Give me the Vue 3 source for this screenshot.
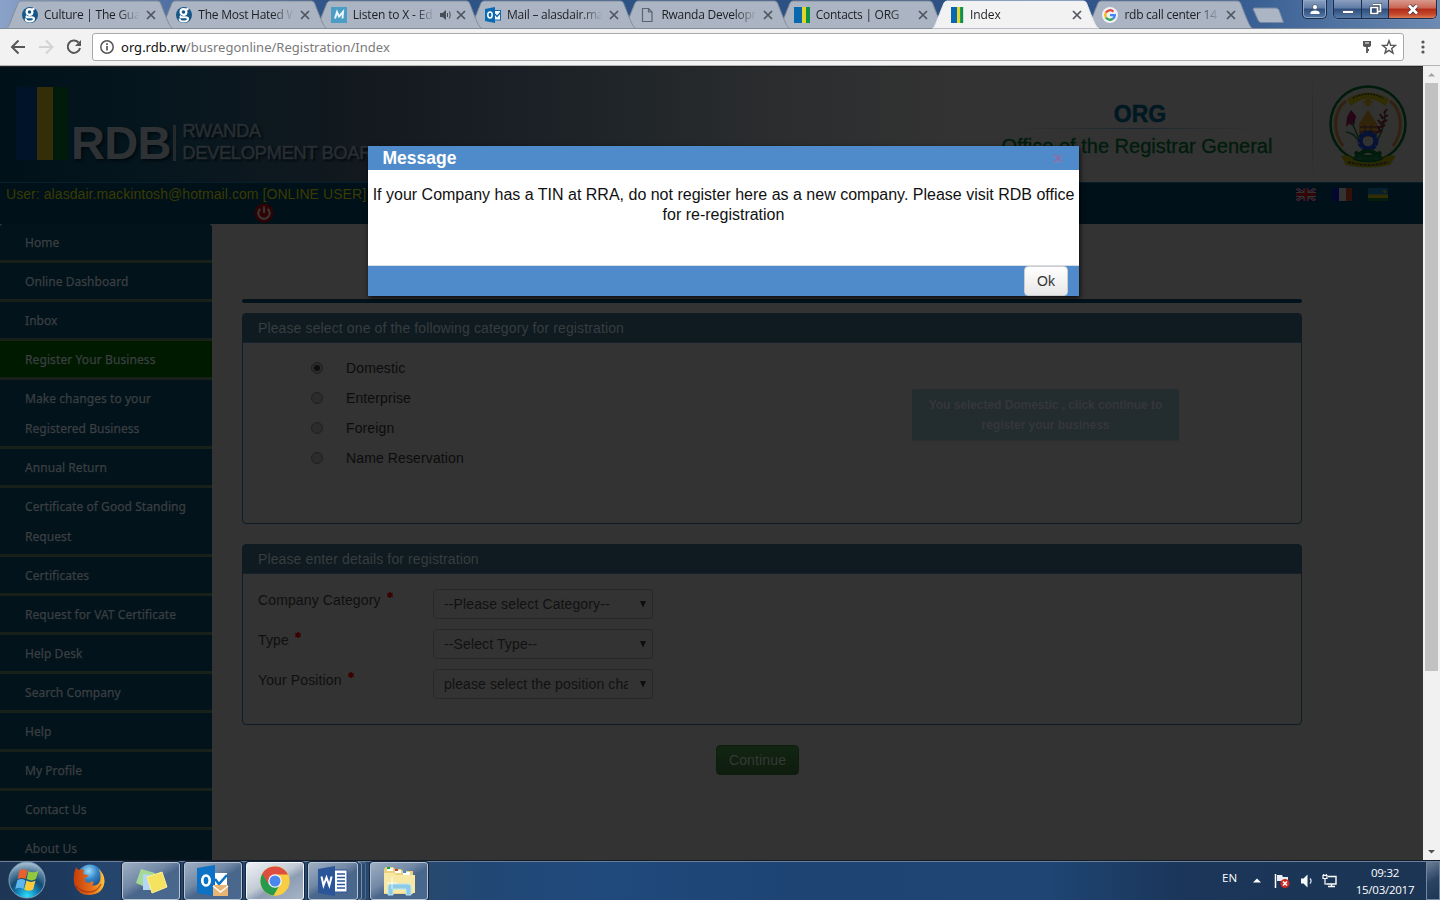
<script setup>
const tabs = [
  { title: 'Culture | The Guardian', icon: 'guardian' },
  { title: 'The Most Hated Woman', icon: 'guardian' },
  { title: 'Listen to X - Ed Sheeran', icon: 'mix', audio: true },
  { title: 'Mail – alasdair.mackintosh', icon: 'outlook' },
  { title: 'Rwanda Development', icon: 'page' },
  { title: 'Contacts | ORG', icon: 'rdb' },
  { title: 'Index', icon: 'rdb', active: true },
  { title: 'rdb call center 1415', icon: 'google' },
]
const menu = [
  'Home', 'Online Dashboard', 'Inbox', 'Register Your Business', 'Make changes to your Registered Business',
  'Annual Return', 'Certificate of Good Standing Request', 'Certificates', 'Request for VAT Certificate',
  'Help Desk', 'Search Company', 'Help', 'My Profile', 'Contact Us', 'About Us',
]
const categories = ['Domestic', 'Enterprise', 'Foreign', 'Name Reservation']
const fields = [
  { label: 'Company Category', value: '--Please select Category--' },
  { label: 'Type', value: '--Select Type--' },
  { label: 'Your Position', value: 'please select the position chairman' },
]
</script>

<template>
  <div class="screen">
    <div class="tabstrip">
      <div class="tabs">
        <div v-for="(t, i) in tabs" :key="i" class="tab" :class="{ active: t.active }" :style="{ zIndex: t.active ? 20 : 10 - i }">
          <svg class="shape" width="168" height="29" viewBox="0 0 168 29">
            <path d="M0.5 28.5 C3 27 3 25 12 3 Q13 1 15 1 H151.500 Q153.500 1 154.500 3 C163 25 164 27 167 28.500" :fill="t.active ? '#f2f2f2' : '#abb4c2'" :stroke="t.active ? '#e9edf2' : '#818b9a'" />
            <path v-if="!t.active" d="M0 28.500 H168" stroke="#838b97" />
          </svg>
          <svg class="fav" width="16" height="16" viewBox="0 0 16 16">
            <g v-if="t.icon === 'guardian'">
              <circle cx="8" cy="8" r="8" fill="#165788" />
              <ellipse cx="7.500" cy="5" rx="2.900" ry="2.800" fill="none" stroke="#fff" stroke-width="2.200" />
              <path d="M9.500 2.800 12.500 1.500M5 8.600Q3.500 10.300 6 10.300H9.500Q12.500 10.500 12 12.300Q11 14.500 8 14.500Q3 14.400 3.800 11.600" fill="none" stroke="#fff" stroke-width="2" />
            </g>
            <g v-else-if="t.icon === 'mix'">
              <rect width="16" height="16" fill="#4c9dc5" />
              <path d="M4 11.500 6 5 8 9.500 12 5 11.500 11.500" fill="none" stroke="#e9f4fb" stroke-width="2" />
            </g>
            <g v-else-if="t.icon === 'outlook'">
              <rect x="9" y="3.500" width="6.500" height="9.500" fill="#fff" stroke="#0f68b0" />
              <path d="m10 7 2 2.500 3.500-4" fill="none" stroke="#0f68b0" stroke-width="1.300" />
              <path d="M0 2 10 0V16L0 14Z" fill="#0c69b4" />
              <ellipse cx="5" cy="8" rx="2.200" ry="2.900" fill="none" stroke="#fff" stroke-width="1.500" />
            </g>
            <g v-else-if="t.icon === 'page'" fill="none" stroke="#5b636e" stroke-width="1.200">
              <path d="M3.500 1.500H9.500L13 5V14.500H3.500Z" /><path d="M9.500 1.500V5H13" />
            </g>
            <g v-else-if="t.icon === 'rdb'" :transform="t.active ? 'translate(3 0) scale(.76 1)' : null">
              <path d="M0 0H8V16H0Z" fill="#0968ad" /><path d="M8 0H12V16H8Z" fill="#e3d42b" /><path d="M12 0H16V16H12Z" fill="#0e9045" />
            </g>
            <g v-else fill="none" stroke-width="2.300">
              <circle cx="8" cy="8" r="8" fill="#eef0f4" />
              <path d="M11.400 4.600A4.800 4.800 0 0 0 3.900 5.600" stroke="#e34a3c" /><path d="M3.900 5.600A4.800 4.800 0 0 0 3.900 10.500" stroke="#f2b90f" />
              <path d="M3.900 10.500A4.800 4.800 0 0 0 11 11.700" stroke="#35a553" /><path d="M11 11.700A4.800 4.800 0 0 0 12.800 8.100H8" stroke="#4384f0" />
            </g>
          </svg>
          <span class="tab-title" :class="{ short: t.audio }">{{ t.title }}</span>
          <svg v-if="t.audio" class="audio" width="12" height="12" viewBox="0 0 12 12"><path d="M0 4H2.500L6 1V11L2.500 8H0Z" fill="#474d57" /><path d="M7.500 4V8M9.500 2.500Q11 6 9.500 9.500" fill="none" stroke="#474d57" /></svg>
          <svg class="close" width="10" height="10" viewBox="0 0 10 10"><path d="m1 1 8 8M9 1 1 9" stroke="#50555d" stroke-width="1.700" /></svg>
        </div>
      </div>
      <svg class="newtab" width="34" height="17" viewBox="0 0 34 17"><path d="M3 1H25Q27 1 28 3L32.500 15.500H10Q8 15.500 7 13L2 2Z" fill="#acb5c3" stroke="#7688a3" /></svg>
      <div class="winbtns">
        <span class="wb user"><svg width="12" height="13" viewBox="0 0 12 13"><circle cx="6" cy="4" r="2.500" fill="#fff" stroke="#26364f" stroke-width=".6" /><path d="M1.500 11V9.500Q2 7.500 6 7.500T10.500 9.500V11Z" fill="#fff" /></svg></span>
        <span class="wgroup">
          <span class="wb min"><i></i></span>
          <span class="wb res"><svg width="13" height="12" viewBox="0 0 13 12"><path d="M4 1.500H11.500V8.500H9M2 4.500H8.500V10.500H2Z" fill="none" stroke="#36475f" stroke-width="3" /><path d="M4 1.500H11.500V8.500H9M2 4.500H8.500V10.500H2Z" fill="none" stroke="#fff" stroke-width="1.700" /></svg></span>
          <span class="wb cls"><svg width="14" height="11" viewBox="0 0 14 11"><path d="m3 1.500 8 8M11 1.500l-8 8" stroke="#4a3540" stroke-width="4.200" /><path d="m3 1.500 8 8M11 1.500l-8 8" stroke="#fff" stroke-width="2.700" /></svg></span>
        </span>
      </div>
    </div>

    <div class="toolbar">
      <svg class="nav" width="82" height="20" viewBox="0 0 82 20" fill="none" stroke-width="2">
        <path d="M15 10H2.500M8.500 3.500 2 10l6.500 6.500" stroke="#575757" />
        <path d="M29 10H41.500M36 3.500 42.500 10 36 16.500" stroke="#d3d3d3" />
        <path d="M68.500 5.500A6.200 6.200 0 1 0 70 11" stroke="#575757" /><path d="M71 3V9H65Z" fill="#575757" />
      </svg>
      <div class="omnibox">
        <svg width="16" height="16" viewBox="0 0 16 16"><circle cx="8" cy="8" r="6.200" fill="none" stroke="#555" stroke-width="1.500" /><path d="M8 7v4.500M8 4.200v1.700" stroke="#555" stroke-width="1.700" /></svg>
        <span class="url"><b>org.rdb.rw</b>/busregonline/Registration/Index</span>
        <svg class="key" width="10" height="14" viewBox="0 0 10 14"><path d="M1 1H9V6L7.500 7H2.500L1 6Z" fill="#555" /><path d="M5 6v7M5 10h2" stroke="#555" stroke-width="1.800" /><path d="M3 3H7" stroke="#fff" /></svg>
        <svg class="star" width="16" height="16" viewBox="0 0 16 16"><path d="m8 1.700 1.700 4.500 4.800.2-3.800 3 1.300 4.700L8 11.400l-4 2.700 1.300-4.700-3.800-3 4.800-.2Z" fill="none" stroke="#555" stroke-width="1.400" /></svg>
      </div>
      <svg class="dots" width="4" height="14" viewBox="0 0 4 14" fill="#555"><circle cx="2" cy="2" r="1.600" /><circle cx="2" cy="7" r="1.600" /><circle cx="2" cy="12" r="1.600" /></svg>
    </div>

    <div class="viewport">
      <div class="page">
        <header class="banner">
          <div class="logo">
            <svg width="52" height="74" viewBox="0 0 52 74"><path d="M0 0H21V73H0Z" fill="#001328" /><path d="M21 0H37V73H21Z" fill="#332e08" /><path d="M37 0H52V73H37Z" fill="#001b0c" /></svg>
            <span class="rdb">RDB</span>
            <span class="bar"></span>
            <span class="board">RWANDA<br>DEVELOPMENT BOARD</span>
          </div>
          <div class="org"><b>ORG</b><i></i><span>Office of the Registrar General</span></div>
          <div class="vline"></div>
          <svg class="seal" width="80" height="86" viewBox="0 0 80 86">
            <circle cx="40" cy="40" r="37.500" fill="#323331" stroke="#001b0c" stroke-width="2.500" />
            <path d="M15 62C3 46 7 25 18 17M65 62C77 46 73 25 62 17" fill="none" stroke="#33210f" stroke-width="3" />
            <path d="M19 15Q40 2 61 15L57 22Q40 7 23 22Z" fill="#302d02" /><path d="M25 14Q40 6 55 14" fill="none" stroke="#111" stroke-width="1.500" stroke-dasharray="2 1" />
            <circle cx="40" cy="18" r="3.500" fill="#33290a" /><path d="M40 12v12M34 18h12M36 14l8 8M44 14l-8 8" stroke="#33290a" />
            <path d="M40 26 31 40V53H49V40Z" fill="#32230b" /><path d="M32 43h16M32 48h16M37 41v12M43 41v12" stroke="#211510" stroke-width="1.300" />
            <circle cx="40" cy="57" r="8" fill="none" stroke="#061237" stroke-width="5" stroke-dasharray="4 .7" /><circle cx="40" cy="57" r="7" fill="none" stroke="#061237" stroke-width="3" />
            <path d="m23 26 5 6-2 10-5-2-3 3 1-10Z" fill="#260516" /><path d="M23 36 31 55M57 27Q57 43 50 55M18 48q8 1 12 8" fill="none" stroke="#0a1c12" stroke-width="1.500" />
            <path d="m59 25-3 4m4 2-5 3m4 2-6 3m4 2-7 3m4 2-6 3M52 30l3 5m-5 1 4 5m-5 1 3 5" stroke="#20090f" stroke-width="2" />
            <path d="M27 68Q40 78 53 68M27 74Q40 60 53 74" fill="none" stroke="#001b0c" stroke-width="4" />
            <path d="M13 72Q22 70 26 76Q40 82 54 76Q58 70 68 72L62 81Q40 86 18 81Z" fill="#2b2902" /><path d="M20 78Q40 84 60 78" fill="none" stroke="#111" stroke-width="1.500" stroke-dasharray="3 1" />
            <path d="M29 72Q40 78 51 72" fill="none" stroke="#061e12" stroke-width="4" />
          </svg>
        </header>
        <div class="userbar">
          <div class="who">User: alasdair.mackintosh@hotmail.com [ONLINE USER]
            <svg width="20" height="20" viewBox="0 0 20 20"><circle cx="10" cy="10" r="9.500" fill="#2d0304" /><path d="M6.300 5.800A5.700 5.700 0 1 0 13.700 5.800M10 3.500V10" fill="none" stroke="#3b3434" stroke-width="2.200" /></svg>
          </div>
          <div class="flags">
            <svg width="20" height="13" viewBox="0 0 20 13"><path fill="#06082b" d="M0 0H20V13H0Z" /><path d="m0 0 20 13M20 0 0 13" stroke="#333" stroke-width="3" /><path d="m0 0 20 13M20 0 0 13" stroke="#320608" /><path d="M10 0V13M0 6.500H20" stroke="#333" stroke-width="5" /><path d="M10 0V13M0 6.500H20" stroke="#320608" stroke-width="3" /></svg>
            <svg width="20" height="13" viewBox="0 0 20 13"><path fill="#05082e" d="M0 0H7V13H0Z" /><path fill="#333" d="M7 0H14V13H7Z" /><path fill="#331008" d="M14 0H20V13H14Z" /></svg>
            <svg width="20" height="13" viewBox="0 0 20 13"><path fill="#06202f" d="M0 0H20V7H0Z" /><path fill="#322d04" d="M0 6.500H20V10H0Z" /><path fill="#061c0c" d="M0 10H20V13H0Z" /><circle cx="16.500" cy="3.500" r="1.500" fill="#332b08" /></svg>
          </div>
        </div>
        <div class="columns">
          <nav class="menu"><a v-for="m in menu" :key="m" :class="{ on: m === 'Register Your Business' }">{{ m }}</a></nav>
          <main>
            <div class="rule"></div>
            <section class="panel first">
              <h3>Please select one of the following category for registration</h3>
              <div class="pick">
                <div class="radios">
                  <label v-for="(c, i) in categories" :key="c"><span class="radio" :class="{ sel: i === 0 }"></span>{{ c }}</label>
                </div>
                <div class="info">You selected Domestic , click continue to<br>register your business</div>
              </div>
            </section>
            <section class="panel second">
              <h3>Please enter details for registration</h3>
              <div class="form">
                <div v-for="f in fields" :key="f.label" class="row">
                  <span class="lbl">{{ f.label }}<svg width="6" height="6" viewBox="0 0 6 6"><path d="M3 0V6M.3 1.500 5.700 4.500M5.700 1.500.3 4.500" stroke="#3c0000" stroke-width="1.500" /></svg></span>
                  <span class="select"><span>{{ f.value }}</span><svg width="6" height="7" viewBox="0 0 6 7"><path d="M0 0H6L3 6.500Z" fill="#0d0d0d" /></svg></span>
                </div>
              </div>
            </section>
            <div class="continue">Continue</div>
          </main>
        </div>
      </div>
      <div class="scrollbar">
        <svg width="17" height="17" viewBox="0 0 17 17"><path d="M5 10.500 8.500 7 12 10.500Z" fill="#a3a3a3" /></svg>
        <div class="thumb"></div>
        <svg class="down" width="17" height="17" viewBox="0 0 17 17"><path d="M5 7 8.500 10.500 12 7Z" fill="#505050" /></svg>
      </div>
      <div class="modal">
        <div class="mhead"><b>Message</b><svg width="10" height="11" viewBox="0 0 10 11"><path d="m1.500 2.500 7 7M8.500 2.500l-7 7" stroke="#6b98cf" stroke-width="2.500" /><path d="m1.500 2 7 7M8.500 2l-7 7" stroke="#846faa" stroke-width="2.300" /></svg></div>
        <div class="mbody">If your Company has a TIN at RRA, do not register here as a new company. Please visit RDB office<br>for re-registration</div>
        <div class="mfoot"><span>Ok</span></div>
      </div>
    </div>

    <div class="taskbar">
      <svg class="orb" width="38" height="38" viewBox="0 0 38 38">
        <defs>
          <radialGradient id="orb" cx=".5" cy=".95" r=".9"><stop offset="0" stop-color="#2fe0fb" /><stop offset=".3" stop-color="#1389bd" /><stop offset=".55" stop-color="#134a72" /><stop offset=".8" stop-color="#577f9f" /><stop offset="1" stop-color="#9fb8cb" /></radialGradient>
        </defs>
        <circle cx="19" cy="19" r="18" fill="url(#orb)" stroke="#7ea2bd" />
        <g transform="translate(1.200 1.200) scale(.94)">
          <path d="M11 9Q15 6 19.500 9L17.500 18Q13 15.500 9 18Z" fill="#ea602c" /><path d="M20.500 9.500Q26 12 31 9L28.500 18Q24 21 18.500 18Z" fill="#92c83e" />
          <path d="M8.500 19.500Q13 16.500 17.200 19.500L15 28.500Q11 26 6.500 28.500Z" fill="#5eb7ee" /><path d="M18.300 19.500Q23.500 22.500 28 19.500L25.500 29Q21 32 16 29Z" fill="#fccb3c" />
        </g>
      </svg>
      <svg class="ff" width="32" height="32" viewBox="0 0 32 32">
        <defs>
          <radialGradient id="globe" cx=".45" cy=".25" r=".8"><stop offset="0" stop-color="#9fdcf7" /><stop offset=".4" stop-color="#3587cb" /><stop offset="1" stop-color="#0b2b6b" /></radialGradient>
          <linearGradient id="fox" x1="0" x2="1"><stop offset="0" stop-color="#c43d0b" /><stop offset=".6" stop-color="#e8711a" /><stop offset="1" stop-color="#fbc63e" /></linearGradient>
        </defs>
        <circle cx="17" cy="13.500" r="13" fill="url(#globe)" />
        <path d="M3 3Q4 5.500 6 6Q9 4.500 11 6L10 9.500Q12 11 15.500 11Q15 13 12 14Q11 17 14 18.500Q17 19.500 19 17Q22 18 19 21.500Q25 22 27 17Q28.500 10 25.500 5Q32 10 31.500 18Q30 30 17 31Q5 31 1.500 21Q-.5 12 3 3Z" fill="url(#fox)" />
        <path d="M3 22Q8 28 16 28Q24 28 28 20" fill="none" stroke="#9f2b0c" stroke-width="1.500" opacity=".6" />
      </svg>
      <div class="task t1"><svg width="36" height="30" viewBox="0 0 36 30"><path d="m8 3 14 4-5 16L3 17Z" fill="#a5d996" /><path d="m10 8 15 2-1 14-14 0Z" fill="#b4d8f4" /><path d="m14 11 15-5 5 15-15 6Z" fill="#f5e25f" stroke="#fff0a0" /></svg></div>
      <div class="task"><svg width="34" height="32" viewBox="0 0 34 32"><path d="M18 8H31V22H18Z" fill="#fff" /><path d="m19 14 4 5 8-9" fill="none" stroke="#0b72c6" stroke-width="2.500" /><path d="M1 3 19 0V31L1 28Z" fill="#0b72c6" /><ellipse cx="10" cy="15.500" rx="3.700" ry="5" fill="none" stroke="#fff" stroke-width="2.700" /><path d="M17 20H32V31H17Z" fill="#e9b573" /><path d="m17 21 7.500 6 7.500-6" fill="none" stroke="#fff" stroke-width="1.500" /></svg></div>
      <div class="task lit"><svg width="30" height="30" viewBox="0 0 30 30"><circle cx="15" cy="15" r="14.700" fill="#f9cd42" /><path d="M15 15 2.300 7.700A14.700 14.700 0 0 0 13.500 29.600L20 18.500Z" fill="#279b4d" /><path d="M2.300 7.700A14.700 14.700 0 0 1 28 8.500H15L8.500 18Z" fill="#dd4d40" /><circle cx="15" cy="15" r="6.800" fill="#f4f6f8" /><circle cx="15" cy="15" r="5.500" fill="#4b86ed" /></svg></div>
      <div class="task word"><svg width="32" height="30" viewBox="0 0 32 30"><path d="M17 4H30V26H17Z" fill="#fff" stroke="#2b5599" /><path d="M20 8H28M20 11.500H28M20 15H28M20 18.500H28M20 22H28" stroke="#2b5599" stroke-width="1.300" /><path d="M1 3 18 0V30L1 27Z" fill="#2b5599" /><path d="m4.500 10.500 2 9 3-8 2.800 8 2.300-9" fill="none" stroke="#fff" stroke-width="2" /></svg></div>
      <span class="stack"></span><span class="stack s2"></span>
      <div class="task ex"><svg width="34" height="32" viewBox="0 0 34 32"><path d="M2 4 4 2H11L13 4H19L21 6H31V29H2Z" fill="#ead27e" /><path d="M5 3h6v3H5ZM13 5h6v3h-6ZM21 7h7v3h-7Z" fill="#fff" /><path d="M5 2h3v2H5Z" fill="#1ba53c" /><path d="M13 4h3v2h-3Z" fill="#c8432d" /><path d="M21 6h3v2h-3Z" fill="#3a8fd4" /><path d="M2 8H12L14 10H33V28H2Z" fill="#f7e9a5" /><path d="M6 30V22Q6 19 9 19H26Q29 19 29 22V30H24V24H11V30Z" fill="#8ccbe6" stroke="#b9e6f5" /><path d="M10 12v12M5 18h10" stroke="#fff" stroke-width=".8" /></svg></div>
      <div class="tray">
        <span class="lang">EN</span>
        <svg width="8" height="5" viewBox="0 0 8 5"><path d="M0 4.500 4 .5 8 4.500Z" fill="#fff" /></svg>
        <svg class="flag" width="17" height="16" viewBox="0 0 17 16"><path d="M1.500 1V15" stroke="#fff" stroke-width="1.500" /><path d="M3 2H8L9 4H14V10H9L8 8H3Z" fill="#e9eef4" /><circle cx="11" cy="10.500" r="4.500" fill="#d52720" /><path d="m9 8.500 4 4m0-4-4 4" stroke="#fff" stroke-width="1.500" /></svg>
        <svg class="snd" width="14" height="16" viewBox="0 0 14 16"><path d="M1 5.500H3.500L7.500 1.500V14.500L3.500 10.500H1Z" fill="#f7f9fb" /><path d="M10 5.500Q12.300 8 10 10.500" fill="none" stroke="#dce5ee" stroke-width="1.200" /></svg>
        <svg class="net" width="16" height="15" viewBox="0 0 16 15"><path d="M6 3.500H14V11H4.500M9.500 11V13.500M6 13.500H13" fill="none" stroke="#fff" stroke-width="1.400" /><path d="M1 2.500H5V5.500H1ZM1.700 1V2.500M4.300 1V2.500M3 5.500V11H5" fill="#1c3759" stroke="#fff" stroke-width="1.200" /></svg>
        <div class="clock">09:32<br>15/03/2017</div>
        <span class="desk"></span>
      </div>
    </div>
  </div>
</template>

<style>
html, body { overflow: hidden; background: #333; }
</style>
<style scoped>
.screen { width: 1440px; height: 900px; display: flex; flex-direction: column; overflow: hidden; font-family: "Liberation Sans", Arial, sans-serif; }
.screen * { box-sizing: border-box; }
svg { display: block; flex: none; }

.tabstrip { height: 29px; flex: none; display: flex; background: linear-gradient(90deg, #8ba2c8 0, #5273a4 160px, #2f5487 330px, #2c5082 900px, #335a90 1230px, #5476a3 1350px, #6c8ab2 1440px); border-bottom: 1px solid #7e8997; }
.tabs { display: flex; padding-left: 6px; }
.tab { position: relative; width: 154.35px; height: 29px; display: flex; align-items: center; padding: 1px 0 0 16px; flex: none; font: 12px/16px "Open Sans", "Noto Sans", sans-serif; color: #1c1f24; }
.shape { position: absolute; left: 0; top: 0; }
.fav { position: relative; }
.tab-title { position: relative; width: 95px; margin-left: 6px; overflow: hidden; white-space: nowrap; letter-spacing: -.25px; -webkit-mask-image: linear-gradient(90deg, #000 74px, transparent 96px); mask-image: linear-gradient(90deg, #000 74px, transparent 96px); }
.active .tab-title { letter-spacing: -.1px; }
.tab-title.short { width: 80px; letter-spacing: -.15px; -webkit-mask-image: linear-gradient(90deg, #000 62px, transparent 82px); mask-image: linear-gradient(90deg, #000 62px, transparent 82px); }
.audio { position: relative; margin: 0 -1px 0 7px; }
.close { position: relative; margin-left: 7px; }
.audio + .close { margin-left: 5px; }
.newtab { margin: 7px 0 0 10px; }
.winbtns { margin-left: auto; display: flex; gap: 6px; padding-right: 3px; }
.wb { height: 18px; display: flex; align-items: center; justify-content: center; background: linear-gradient(#8ba0c0, #5f7ba6 45%, #2e4d7d 50%, #567aa8); }
.user { width: 25px; border: 1px solid #1b2c4a; border-top: 0; border-radius: 0 0 5px 5px; box-shadow: inset 0 0 0 1px #8ea6c7; height: 19px; }
.wgroup { display: flex; border: 1px solid #1b2c4a; border-top: 0; border-radius: 0 0 5px 5px; overflow: hidden; height: 19px; box-shadow: 0 0 1px #c0cee0; }
.min { width: 28px; border-right: 1px solid #1b2c4a; }
.min i { width: 12px; height: 4px; background: #fff; border: 1px solid #4a5c78; margin-top: 5px; }
.res { width: 27px; border-right: 1px solid #1b2c4a; }
.cls { width: 47px; background: linear-gradient(#d99a8d, #c96453 45%, #b12a16 50%, #c5482c 80%, #dd7a55); }

.toolbar { height: 37px; flex: none; background: #f2f2f2; border-bottom: 1px solid #b5b5b5; display: flex; align-items: center; }
.nav { margin-left: 10px; }
.omnibox { width: 1312px; height: 28px; background: #fff; border: 1px solid #a9a9a9; border-radius: 3px; display: flex; align-items: center; padding-left: 6px; }
.url { margin-left: 6px; font: 13px/20px "Noto Sans", "Open Sans", sans-serif; color: #7b7b7b; letter-spacing: .01px; }
.url b { font-weight: 400; color: #111; }
.key { margin-left: auto; }
.star { margin: 0 6px 0 9px; }
.dots { margin-left: 16.500px; }

.viewport { position: relative; height: 794px; flex: none; display: flex; overflow: hidden; }
.page { width: 1423px; background: #333; overflow: hidden; border-top: 1px solid #222; }
.banner { height: 115px; display: flex; background: linear-gradient(90deg, #001119 0, #06161e 150px, #13191f 370px, #1c2226 560px, #2a2c2e 760px, #333 960px); }
.logo { display: flex; width: 385px; padding: 20px 0 0 16px; white-space: nowrap; flex: none; overflow: hidden; }
.rdb { margin: 32px 0 0 3px; width: 107px; font-weight: bold; font-size: 47px; line-height: 47px; color: #2f3234; letter-spacing: -.7px; text-shadow: 2px 2px 3px #000a10; }
.bar { width: 3px; height: 36px; background: #24292c; margin: 38px 5px 0 -1px; flex: none; }
.board { margin: 33px 0 0 1px; font-size: 18.500px; line-height: 22px; color: #282e32; -webkit-text-stroke: .5px #282e32; letter-spacing: -.45px; text-shadow: 2px 2px 2px #000a10; }
.org { width: 320px; margin-left: 592px; padding-top: 34px; display: flex; flex-direction: column; align-items: center; flex: none; }
.org b { font-size: 23px; line-height: 26px; color: #001822; -webkit-text-stroke: .5px #001822; margin-left: 6px; }
.org i { width: 260px; height: 1px; margin: 1px 0 6px; background: linear-gradient(90deg, #333, #1d282d, #333); }
.org span { font-size: 20px; line-height: 22px; color: #001c0d; white-space: nowrap; -webkit-text-stroke: .3px #001c0d; }
.vline { width: 1px; height: 108px; margin: 5px 0 0 15px; background: linear-gradient(#333, #242a2e, #333); }
.seal { margin: 17px 0 0 15px; }
.userbar { height: 42px; background: #00111a; border-top: 1px solid #071f2a; display: flex; justify-content: space-between; }
.who { width: 368px; padding: 3px 0 0 6px; font-size: 14px; line-height: 16px; color: #3b3b00; white-space: nowrap; letter-spacing: .07px; }
.who svg { margin: 1px 0 0 248px; }
.flags { display: flex; gap: 16px; padding: 5px 35px 0 0; }

.columns { display: flex; }
.menu { width: 212px; border-radius: 4px 4px 0 0; background: #02131b; overflow: hidden; flex: none; }
.menu a { display: block; padding: 4px 15px 2px 25px; line-height: 30px; border-bottom: 3px solid #17211a; font-family: "Noto Sans", Tahoma, sans-serif; font-size: 12px; color: #3b3f42; letter-spacing: .06px; -webkit-text-stroke: .25px #3b3f42; }
.menu a.on { background: #001a00; letter-spacing: .1px; }
main { width: 1060px; margin: 75px 0 0 30px; font-size: 14px; display: flex; flex-direction: column; }
.rule { height: 4px; border-radius: 2px; background: #02131b; margin-bottom: 10px; }
.panel { border: 1px solid #0d1c24; border-radius: 4px; margin-bottom: 20px; }
.panel h3 { margin: 0; height: 29px; padding-left: 15px; font-size: 14px; line-height: 28px; font-weight: 400; background: #0f1b21; border-bottom: 1px solid #14222e; color: #373d40; letter-spacing: .12px; }
.first { height: 211px; }
.second { height: 181px; }
.pick { display: flex; justify-content: space-between; padding: 10px 122px 0 68px; }
.radios label { height: 30px; display: flex; align-items: center; gap: 23px; color: #0c0c0c; letter-spacing: .12px; }
.radio { width: 12px; height: 12px; border: 1px solid #202020; border-radius: 50%; background: #2c2c2c; display: flex; align-items: center; justify-content: center; }
.sel::after { content: ""; width: 6px; height: 6px; border-radius: 50%; background: #0e0e0e; }
.info { width: 267px; height: 51px; margin-top: 36px; padding-top: 6px; background: #232c2f; border-radius: 3px; box-shadow: 0 1px 1px #2d2d2d; font-weight: bold; font-size: 12px; line-height: 20px; text-align: center; color: #353739; letter-spacing: -.04px; white-space: nowrap; }
.form { padding: 15px 0 0 15px; display: flex; flex-direction: column; gap: 10px; }
.row { height: 30px; display: flex; }
.lbl { width: 175px; display: flex; line-height: 22px; color: #0f0f0f; letter-spacing: .12px; }
.lbl svg { margin: 3px 0 0 6px; }
.select { width: 220px; height: 30px; border: 1px solid #282828; border-radius: 4px; padding: 0 6px 0 10px; display: flex; align-items: center; justify-content: space-between; color: #111; letter-spacing: .12px; }
.select span { width: 184px; overflow: hidden; white-space: nowrap; line-height: 22px; }
.continue { align-self: flex-start; width: 83px; height: 30px; margin-left: 474px; border-radius: 4px; background: linear-gradient(#122512, #0e1c0e); text-align: center; color: #363a36; border: 1px solid #0e1e0e; line-height: 28px; letter-spacing: .15px; }

.scrollbar { width: 17px; background: #f1f1f1; display: flex; flex-direction: column; }
.thumb { width: 13px; height: 588px; margin-left: 2px; background: #c1c1c1; }
.down { margin-top: auto; }

.modal { position: absolute; left: 368px; top: 80px; width: 711px; height: 150px; background: #fff; box-shadow: 1px 2px 5px rgba(0, 0, 0, .8); display: flex; flex-direction: column; }
.mhead { height: 24px; background: #4f8bca; color: #fff; padding: 0 16px 0 14.5px; display: flex; align-items: center; justify-content: space-between; font-size: 17.500px; line-height: 24px; }
.mbody { flex: 1; padding-top: 15px; text-align: center; color: #111; font-size: 16px; line-height: 20px; white-space: nowrap; }
.mfoot { height: 31px; background: #4f8bca; border-top: 1px solid #d8dde3; padding-right: 11px; display: flex; justify-content: flex-end; }
.mfoot span { width: 44px; height: 30px; background: linear-gradient(#fff, #e7e7e7); border: 1px solid #ccc; border-radius: 4px; text-align: center; font-size: 14px; line-height: 28px; color: #333; }

.taskbar { height: 40px; flex: none; display: flex; background: linear-gradient(90deg, #1e3654 0, #1d3a5f 70px, #25456d 100px, #27496f 430px, #214774 480px, #204a7c 600px, #1d4473 800px, #1e4573 1050px, #1b365a 1180px, #1c3554 1440px); border-top: 1px solid #121a25; box-shadow: inset 0 1px #6b809a; }
.orb { margin: 0 0 0 8px; }
.ff { margin: 3px 0 0 27px; }
.task { width: 58px; height: 38px; margin: 1px 4px 0 0; border: 1px solid #b9c4d2; border-radius: 3px; display: flex; align-items: center; justify-content: center; background: linear-gradient(150deg, #9fafc3 0, #7188a5 40%, #49668b 55%, #4a688e 100%); box-shadow: 0 0 0 1px #15273f; flex: none; }
.t1 { margin-left: 17px; }
.lit { background: linear-gradient(150deg, #eef1f5 0, #c2cbd6 45%, #8d9db3 60%, #a7b4c6 100%); border-color: #f5f7fa; }
.word { width: 50px; margin-right: 0; }
.stack { width: 4px; height: 38px; margin-top: 1px; border: 1px solid #7c90aa; border-left: 0; border-radius: 0 3px 3px 0; background: #2b4a70; }
.s2 { border-color: #53698a; }
.ex { margin-left: 4px; }
.tray { margin-left: auto; display: flex; align-items: center; color: #fff; font: 12px/17px "Open Sans", "Noto Sans", sans-serif; }
.lang { margin: -6px 16px 0 0; width: 15px; font-size: 11.500px; }
.flag { margin-left: 13px; }
.snd { margin-left: 9px; }
.net { margin-left: 8px; }
.clock { width: 70px; margin: 0 6px 0 12px; text-align: center; font-size: 11.500px; letter-spacing: -.25px; }
.desk { width: 14px; height: 39px; border: 1px solid #71879f; background: linear-gradient(150deg, #6d8098, #2c4464 50%, #1d3656); }
</style>
